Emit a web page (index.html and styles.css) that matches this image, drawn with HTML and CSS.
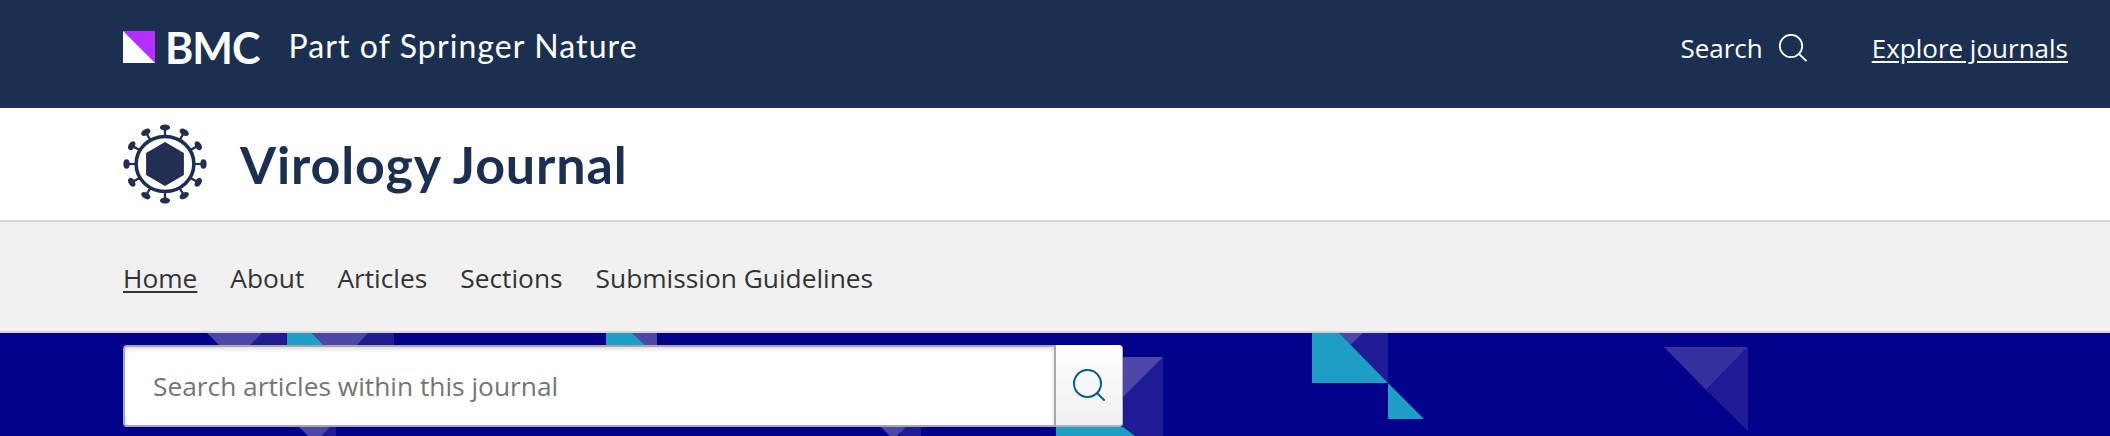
FILE: index.html
```html
<!DOCTYPE html>
<html lang="en">
<head>
  <meta charset="UTF-8">
  <title>Virology Journal</title>
  <link rel="stylesheet" href="styles.css">
</head>
<body>
  <header class="top-bar">
    <a class="brand" href="#">
      <svg class="brand-mark" viewBox="0 0 32 32" aria-hidden="true">
        <rect width="32" height="32" fill="#fff"/>
        <polygon points="0,0 32,0 32,32" fill="#b52eff"/>
      </svg>
      <span class="brand-name">BMC</span>
      <span class="brand-part">Part of Springer Nature</span>
    </a>
    <div class="top-links">
      <a class="top-search" href="#">
        Search
        <svg class="top-search-icon" viewBox="0 0 28 28" aria-hidden="true">
          <circle cx="12" cy="12" r="11.2"/>
          <line x1="20" y1="20" x2="27.5" y2="27"/>
        </svg>
      </a>
      <a class="explore" href="#">Explore journals</a>
    </div>
  </header>

  <div class="journal-bar">
    <svg class="journal-icon" viewBox="-40 -40 80 80" preserveAspectRatio="none" aria-hidden="true">
      <defs>
        <g id="spike">
          <line x1="0" y1="-28" x2="0" y2="-35"/>
          <ellipse cx="0" cy="-36.6" rx="4.8" ry="3"/>
        </g>
      </defs>
      <use href="#spike"/>
      <use href="#spike" transform="rotate(30)"/>
      <use href="#spike" transform="rotate(60)"/>
      <use href="#spike" transform="rotate(90)"/>
      <use href="#spike" transform="rotate(120)"/>
      <use href="#spike" transform="rotate(150)"/>
      <use href="#spike" transform="rotate(180)"/>
      <use href="#spike" transform="rotate(210)"/>
      <use href="#spike" transform="rotate(240)"/>
      <use href="#spike" transform="rotate(270)"/>
      <use href="#spike" transform="rotate(300)"/>
      <use href="#spike" transform="rotate(330)"/>
      <circle class="ring" cx="0" cy="0" r="27.5"/>
      <polygon points="0,-22 18,-11 18,11 0,22 -18,11 -18,-11"/>
    </svg>
    <span class="journal-title">Virology Journal</span>
  </div>

  <nav class="journal-nav">
    <a class="current" href="#">Home</a>
    <a href="#">About</a>
    <a href="#">Articles</a>
    <a href="#">Sections</a>
    <a href="#">Submission Guidelines</a>
  </nav>

  <section class="hero">
    <!-- viewBox uses page coordinates, hero starts at y=333 -->
    <svg class="hero-shapes" viewBox="0 333 2110 103" aria-hidden="true">
      <polygon class="tri-mid" points="261,333 287,333 287,345 249,345"/>
      <polygon class="tri-light" points="207,333 262,333 250,345 219,345"/>
      <polygon class="tri-mid" points="356,333 394,333 394,345 345,345"/>
      <polygon class="tri-cyan" points="287,333 312,333 324,345 287,345"/>
      <polygon class="tri-light" points="312,333 368,333 357,345 324,345"/>
      <polygon class="tri-mid" points="606,333 657,333 657,345 606,345"/>
      <polygon class="tri-light" points="632,333 657,333 657,345 645,345"/>
      <polygon class="tri-cyan" points="606,333 632,333 645,345 606,345"/>

      <polygon class="tri-mid" points="320,427 336,427 336,436 320,436"/>
      <polygon class="tri-light" points="299,427 330,427 321,436 308,436"/>
      <polygon class="tri-mid" points="900,427 921,427 921,436 900,436"/>
      <polygon class="tri-light" points="881,427 906,427 897,436 890,436"/>

      <polygon class="tri-mid" points="1100,357 1163,357 1163,436 1100,436"/>
      <polygon class="tri-light" points="1100,357 1163,357 1123,397 1100,397"/>
      <polygon class="tri-cyan" points="1056,427 1123,427 1135,436 1056,436"/>

      <polygon class="tri-mid" points="1339,333 1388,333 1388,383"/>
      <polygon class="tri-light" points="1339,333 1363,333 1350,345"/>
      <polygon class="tri-cyan" points="1312,333 1339,333 1388,383 1312,383"/>
      <polygon class="tri-cyan" points="1388,383 1424,419 1388,419"/>

      <polygon class="tri-faint" points="1664,347 1748,347 1706,390"/>
      <polygon class="tri-mid" points="1748,347 1748,431 1706,390"/>
    </svg>
    <form class="journal-search" onsubmit="return false;">
      <input class="journal-search-input" type="text" placeholder="Search articles within this journal">
      <button class="journal-search-btn" type="submit" aria-label="Search">
        <svg viewBox="0 0 32 32" aria-hidden="true">
          <circle cx="14.5" cy="14.5" r="13.5"/>
          <line x1="24.5" y1="24.5" x2="31" y2="31"/>
        </svg>
      </button>
    </form>
  </section>
</body>
</html>
```

FILE: styles.css
```css
* {
  box-sizing: border-box;
}

html, body {
  height: 100%;
}

body {
  margin: 0;
  display: flex;
  flex-direction: column;
  overflow: hidden;
  font-family: "Open Sans", "Noto Sans", sans-serif;
  color: #333;
}

a {
  color: inherit;
  text-decoration: none;
}

.top-bar {
  height: 108px;
  padding: 0 42px 0 123px;
  display: flex;
  justify-content: space-between;
  align-items: flex-start;
  background-color: #1b3051;
  color: #fff;
}

.brand {
  display: flex;
  align-items: center;
  height: 94px;
}

.brand-mark {
  width: 32px;
  height: 32px;
}

.brand-name {
  margin-left: 10px;
  font-family: Lato, sans-serif;
  font-size: 43px;
  font-weight: 700;
  letter-spacing: -1px;
  line-height: 1;
}

.brand-part {
  margin: 0 0 3px 29px;
  font-family: Lato, sans-serif;
  font-size: 32px;
  font-weight: 400;
  letter-spacing: 1.1px;
  line-height: 1;
}

.top-links {
  display: flex;
  align-items: center;
  gap: 65px;
  height: 96px;
  font-size: 26px;
}

.top-search {
  display: flex;
  align-items: center;
  gap: 16px;
}

.top-search-icon {
  width: 28px;
  height: 28px;
  fill: none;
  stroke: #fff;
  stroke-width: 1.8;
}

.explore {
  text-decoration: underline;
  text-underline-offset: 3px;
}

.journal-bar {
  height: 114px;
  padding-left: 123px;
  display: flex;
  align-items: center;
  gap: 33px;
  background-color: #fff;
  border-bottom: 2px solid #d5d5d5;
}

.journal-icon {
  width: 84px;
  height: 80px;
  fill: #222e52;
  stroke: none;
}

.journal-icon line {
  stroke: #222e52;
  stroke-width: 2.2;
}

.journal-icon .ring {
  fill: none;
  stroke: #1b3051;
  stroke-width: 3.4;
}

.journal-title {
  font-family: Lato, sans-serif;
  font-size: 52px;
  font-weight: 700;
  color: #1b3051;
  letter-spacing: 0.85px;
}

.journal-nav {
  height: 111px;
  padding: 2px 0 0 123px;
  display: flex;
  align-items: center;
  gap: 33px;
  font-size: 26.3px;
  background-color: #f1f1f1;
  border-bottom: 2px solid #d5d5d5;
}

.journal-nav .current {
  text-decoration: underline;
  text-underline-offset: 3px;
}

.hero {
  position: relative;
  flex: 1;
  padding: 12px 0 0 123px;
  background-color: #02028a;
}

.hero-shapes {
  position: absolute;
  left: 0;
  top: 0;
  width: 2110px;
  height: 103px;
}

.tri-light {
  fill: #4d47aa;
}

.tri-mid {
  fill: #1f1b95;
}

.tri-cyan {
  fill: #1e9dc5;
}

.tri-faint {
  fill: #37309f;
}

.journal-search {
  position: relative;
  display: flex;
  height: 82px;
}

.journal-search-input {
  width: 933px;
  height: 82px;
  padding: 0 28px;
  font-family: inherit;
  font-size: 26.3px;
  color: #333;
  background-color: #fff;
  border: 2px solid #a8a8a8;
  border-radius: 4px 0 0 4px;
  box-shadow: inset 0 2px 4px rgba(0, 0, 0, 0.15);
  outline: none;
}

.journal-search-input::placeholder {
  color: #757575;
  opacity: 1;
}

.journal-search-btn {
  width: 67px;
  height: 82px;
  padding: 0;
  display: flex;
  align-items: center;
  justify-content: center;
  background: linear-gradient(#fff, #f0f0f0);
  border: 0;
  border-bottom: 2px solid #b4b4b4;
  border-right: 1px solid #b4b4b4;
  border-radius: 0 4px 4px 0;
}

.journal-search-btn svg {
  width: 32px;
  height: 32px;
  fill: none;
  stroke: #025e8d;
  stroke-width: 2;
  stroke-linecap: round;
}
```
